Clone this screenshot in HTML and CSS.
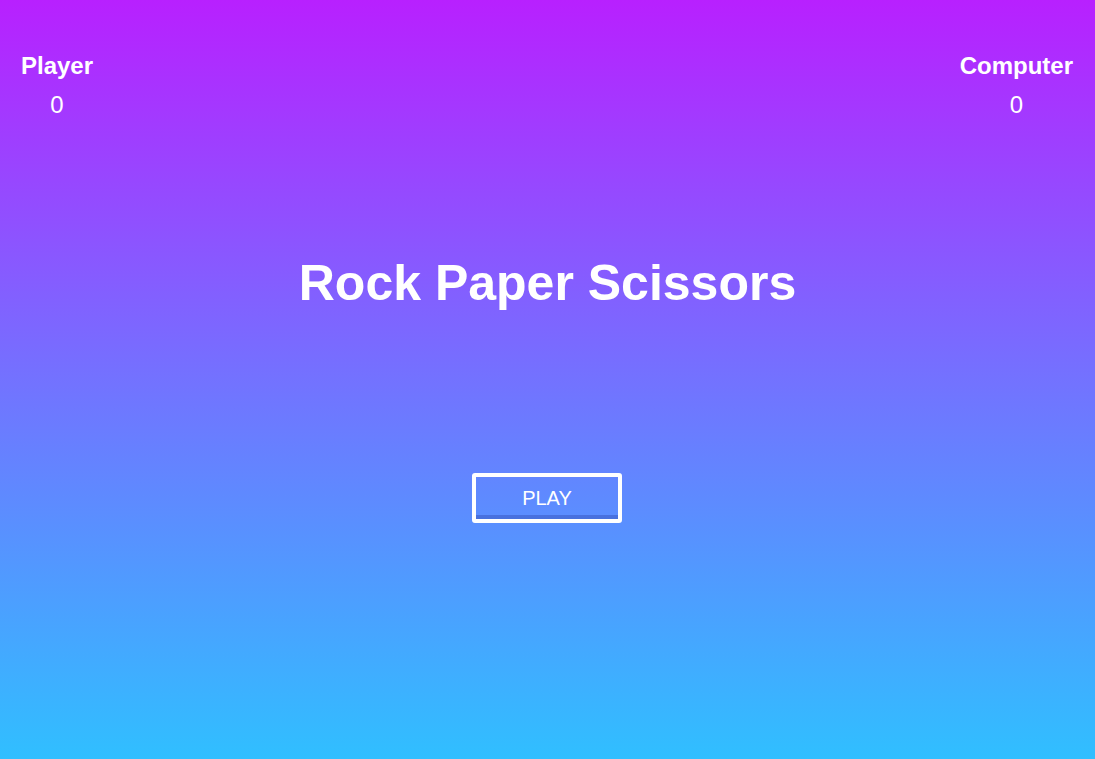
FILE: index.html
```html
<!DOCTYPE html>
<html lang="en">
<head>
<meta charset="utf-8">
<title>Rock Paper Scissors</title>
<link rel="stylesheet" href="styles.css">
</head>
<body>
<div class="game">
  <header class="scores">
    <div class="score">
      <div class="score-name">Player</div>
      <div class="score-value">0</div>
    </div>
    <div class="score">
      <div class="score-name">Computer</div>
      <div class="score-value">0</div>
    </div>
  </header>
  <h1 class="title">Rock Paper Scissors</h1>
  <div class="actions">
    <button class="play-btn">PLAY</button>
  </div>
</div>
</body>
</html>
```
FILE: styles.css
```css
* { box-sizing: border-box; }
html, body {
  margin: 0;
  height: 100%;
}
body {
  font-family: "Liberation Sans", Arial, sans-serif;
  color: #fff;
  background: linear-gradient(to bottom, #b820ff 0%, #7372ff 50%, #30bfff 100%);
  overflow: hidden;
}
.game {
  display: flex;
  flex-direction: column;
  height: 100%;
}
.scores {
  display: flex;
  justify-content: space-between;
  padding: 52px 22px 0 21px;
}
.score {
  display: flex;
  flex-direction: column;
  align-items: center;
  gap: 11px;
  font-size: 24px;
  line-height: 28px;
}
.score-name { font-weight: bold; }
.score-value { font-weight: normal; }
.title {
  margin: 135px 0 0 0;
  text-align: center;
  font-size: 50px;
  line-height: 58px;
  font-weight: bold;
}
.actions {
  display: flex;
  justify-content: center;
  margin-top: 161px;
  padding-right: 1px;
}
.play-btn {
  width: 150px;
  height: 50px;
  border: 4px solid #fff;
  border-radius: 3px;
  background: transparent;
  color: #fff;
  font-family: "Liberation Sans", Arial, sans-serif;
  font-size: 20px;
  padding: 0;
  box-shadow: inset 0 -4px 0 rgba(40, 60, 160, 0.35);
  cursor: pointer;
}
```
